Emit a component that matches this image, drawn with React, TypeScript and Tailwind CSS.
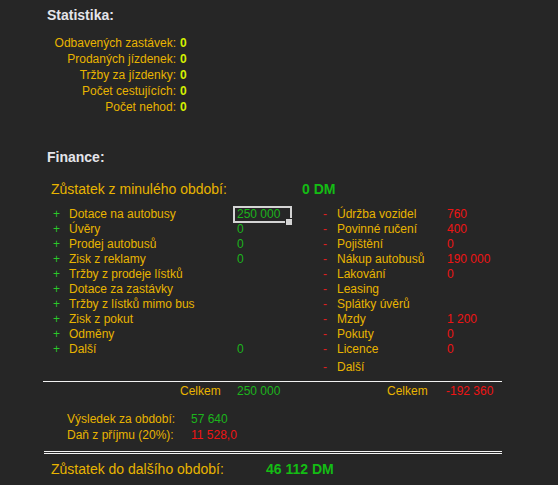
import React from "react";

const Y = "text-[#e8b400]";
const G = "text-[#1cb41c]";
const R = "text-[#ee1414]";

const stats = [
  "Odbavených zastávek:",
  "Prodaných jízdenek:",
  "Tržby za jízdenky:",
  "Počet cestujících:",
  "Počet nehod:",
];

const income: [string, string][] = [
  ["Dotace na autobusy", "250 000"],
  ["Úvěry", "0"],
  ["Prodej autobusů", "0"],
  ["Zisk z reklamy", "0"],
  ["Tržby z prodeje lístků", ""],
  ["Dotace za zastávky", ""],
  ["Tržby z lístků mimo bus", ""],
  ["Zisk z pokut", ""],
  ["Odměny", ""],
  ["Další", "0"],
];

const expenses: [string, string][] = [
  ["Údržba vozidel", "760"],
  ["Povinné ručení", "400"],
  ["Pojištění", "0"],
  ["Nákup autobusů", "190 000"],
  ["Lakování", "0"],
  ["Leasing", ""],
  ["Splátky úvěrů", ""],
  ["Mzdy", "1 200"],
  ["Pokuty", "0"],
  ["Licence", "0"],
];

export default function App() {
  return (
    <div className="w-[558px] h-[485px] bg-[#262626] overflow-hidden font-['Liberation_Sans',Arial,sans-serif]">
      <div className="pt-[7px] pl-[47px] text-[14px] leading-[16px] font-bold text-[#e4e4ea]">
        Statistika:
      </div>
      <div className="mt-[12px] flex flex-col text-[12px] leading-[16px]">
        {stats.map((s) => (
          <div key={s} className="flex h-[16px]">
            <span className={`w-[176px] text-right ${Y}`}>{s}</span>
            <span className="pl-[4px] font-bold text-[#d4f000]">0</span>
          </div>
        ))}
      </div>

      <div className="mt-[34px] pl-[47px] text-[14px] leading-[16px] font-bold text-[#e4e4ea]">
        Finance:
      </div>
      <div className="mt-[15px] flex text-[14px] leading-[18px] h-[18px]">
        <span className={`pl-[51px] w-[302px] ${Y}`}>Zůstatek z minulého období:</span>
        <span className="font-bold text-[#14bc14]">0 DM</span>
      </div>

      <div className="mt-[9px] flex items-start text-[12px] leading-[15px]">
        <div className="pl-[53px] w-[323px] flex flex-col">
          {income.map(([l, v], i) => (
            <div key={l} className="flex h-[15px]">
              <span className="w-[16px] text-[#2ac82a]">+</span>
              <span className={`w-[168px] ${Y}`}>{l}</span>
              <span className={`relative ${G}`}>
                {v}
                {i === 0 && (
                  <span className="absolute left-[-4px] top-[-1px] w-[59px] h-[17px]">
                    <span className="absolute inset-0 border-2 border-[#d4d4d4]" />
                    <span className="absolute left-[52px] top-[12px] w-[8px] h-[8px] bg-[#d4d4d4] border border-[#262626]" />
                  </span>
                )}
              </span>
            </div>
          ))}
        </div>
        <div className="flex flex-col">
          {expenses.map(([l, v]) => (
            <div key={l} className="flex h-[15px]">
              <span className="w-[14px] text-[#e02020]">-</span>
              <span className={`w-[110px] ${Y}`}>{l}</span>
              <span className={R}>{v}</span>
            </div>
          ))}
          <div className="flex h-[15px] mt-[3px]">
            <span className="w-[14px] text-[#e02020]">-</span>
            <span className={`w-[110px] ${Y}`}>Další</span>
          </div>
        </div>
      </div>

      <div className="mt-[6px] ml-[43px] w-[459px] h-px bg-[#f2f2f2]" />

      <div className="mt-[2px] flex text-[12px] leading-[15px] h-[15px]">
        <span className={`pl-[180px] w-[237px] ${Y}`}>Celkem</span>
        <span className={`w-[150px] ${G}`}>250 000</span>
        <span className={`w-[59px] ${Y}`}>Celkem</span>
        <span className={R}>-192 360</span>
      </div>

      <div className="mt-[12px] flex flex-col text-[12px] leading-[16px]">
        <div className="flex h-[16px] pl-[67px]">
          <span className={`w-[124px] ${Y}`}>Výsledek za období:</span>
          <span className={G}>57 640</span>
        </div>
        <div className="flex h-[16px] pl-[67px]">
          <span className={`w-[124px] ${Y}`}>Daň z příjmu (20%):</span>
          <span className={R}>11 528,0</span>
        </div>
      </div>

      <div className="mt-[8px] ml-[44px] w-[458px] h-[3px] border-t-[3px] border-double border-[#f2f2f2]" />

      <div className="mt-[6px] flex text-[14px] leading-[18px] h-[18px]">
        <span className={`pl-[51px] w-[266px] ${Y}`}>Zůstatek do dalšího období:</span>
        <span className="font-bold text-[#14bc14]">46 112 DM</span>
      </div>
    </div>
  );
}
